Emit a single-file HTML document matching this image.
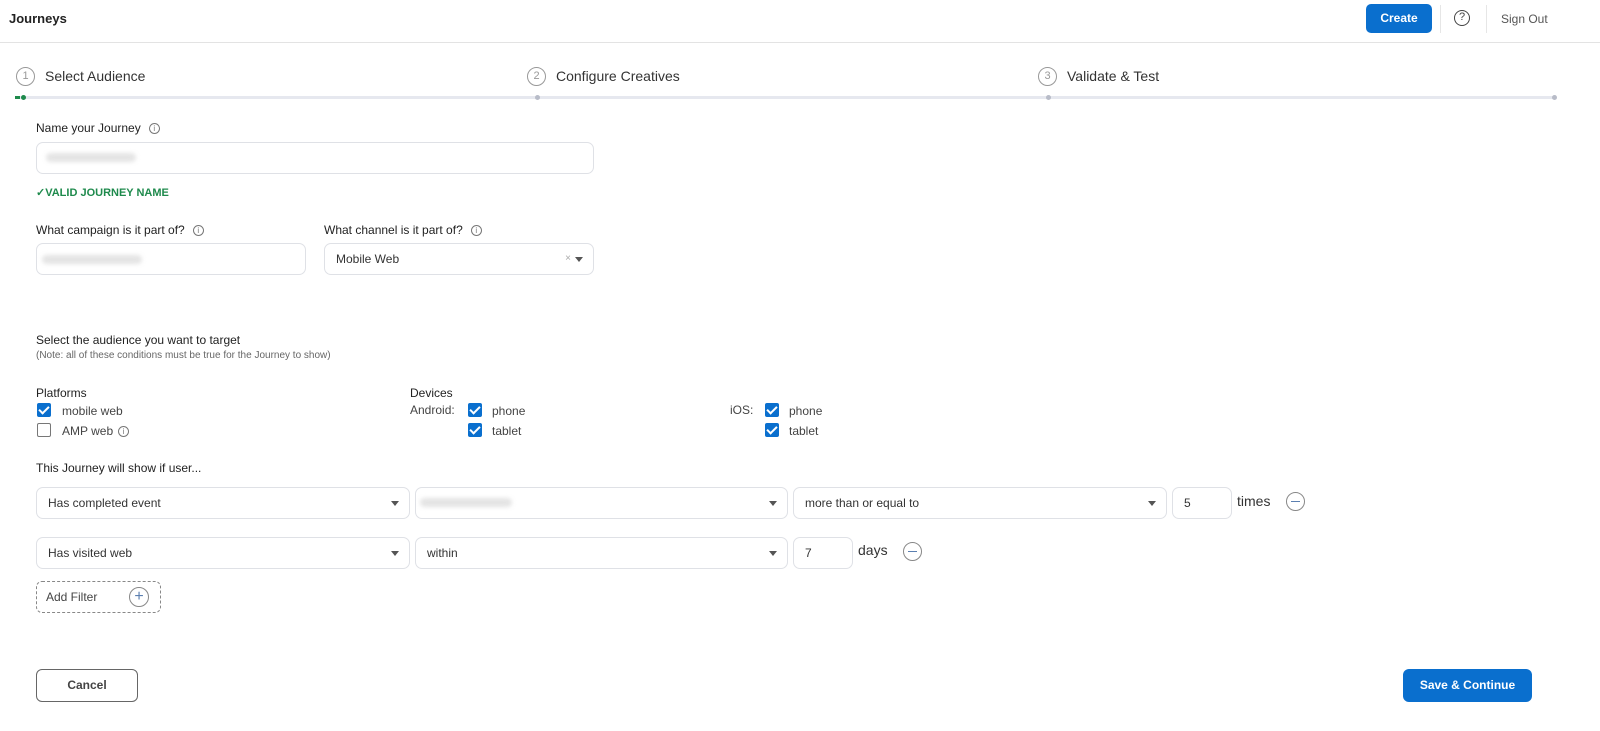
<!DOCTYPE html>
<html><head><meta charset="utf-8"><style>
*{box-sizing:border-box;margin:0;padding:0}
body{width:1600px;height:731px;background:#fff;font-family:"Liberation Sans",sans-serif;color:#222;position:relative;overflow:hidden;font-size:12px}
.a{position:absolute}
.box{position:absolute;border:1px solid #dfe1e6;border-radius:7px;background:#fff}
.lbl{position:absolute;font-size:12px;color:#222}
.sel{position:absolute;border:1px solid #dfe1e6;border-radius:7px;font-size:12px;color:#333;padding-left:11px;line-height:30px}
.sel .car{position:absolute;right:10px;top:13px;border-left:4px solid transparent;border-right:4px solid transparent;border-top:5px solid #555}
.info{display:inline-block;width:11px;height:11px;border:1px solid #777;border-radius:50%;font-size:8px;line-height:9px;text-align:center;color:#777;vertical-align:middle;margin-left:8px}
.cb{position:absolute;width:14px;height:14px;border-radius:2px;background:#0a6fce}
.cb::after{content:"";position:absolute;left:4px;top:1px;width:4px;height:8px;border:solid #fff;border-width:0 2px 2px 0;transform:rotate(45deg)}
.cbe{position:absolute;width:14px;height:14px;border-radius:2px;border:1.5px solid #777}
.step{position:absolute;width:19px;height:19px;border:1px solid #999;border-radius:50%;font-size:11px;color:#999;text-align:center;line-height:17px}
.stxt{position:absolute;font-size:14px;color:#333}
.min{position:absolute;width:19px;height:19px;border:1px solid #888;border-radius:50%}
.min::after{content:"";position:absolute;left:4px;top:8px;width:9px;height:1px;background:#5b7fb0}
.blur{position:absolute;height:9px;background:#e4e4e4;border-radius:5px;filter:blur(2px)}
</style></head><body>
<div class="a" style="left:9px;top:11px;font-size:13px;font-weight:bold;color:#222">Journeys</div>
<div class="a" style="left:1366px;top:4px;width:66px;height:29px;background:#0a6fce;border-radius:5px;color:#fff;font-weight:bold;font-size:12px;text-align:center;line-height:29px">Create</div>
<div class="a" style="left:1440px;top:5px;width:1px;height:28px;background:#e6e6e6"></div>
<div class="a" style="left:1486px;top:5px;width:1px;height:28px;background:#e6e6e6"></div>
<div class="a" style="left:1454px;top:10px;width:16px;height:16px;border:1.5px solid #444;border-radius:50%;font-size:11px;text-align:center;line-height:13px;color:#444">?</div>
<div class="a" style="left:1501px;top:12px;font-size:12px;color:#555">Sign Out</div>
<div class="a" style="left:0;top:42px;width:1600px;height:1px;background:#e3e3e3"></div>

<div class="step" style="left:16px;top:67px">1</div><div class="stxt" style="left:45px;top:68px">Select Audience</div>
<div class="step" style="left:527px;top:67px">2</div><div class="stxt" style="left:556px;top:68px">Configure Creatives</div>
<div class="step" style="left:1038px;top:67px">3</div><div class="stxt" style="left:1067px;top:68px">Validate &amp; Test</div>
<div class="a" style="left:16px;top:96px;width:1538px;height:3px;background:#e6e8ef"></div>
<div class="a" style="left:15px;top:96px;width:5px;height:3px;background:#1e8a4c"></div>
<div class="a" style="left:21px;top:95px;width:5px;height:5px;border-radius:50%;background:#1e8a4c"></div>
<div class="a" style="left:535px;top:95px;width:5px;height:5px;border-radius:50%;background:#b8bcc8"></div>
<div class="a" style="left:1046px;top:95px;width:5px;height:5px;border-radius:50%;background:#b8bcc8"></div>
<div class="a" style="left:1552px;top:95px;width:5px;height:5px;border-radius:50%;background:#b8bcc8"></div>

<div class="lbl" style="left:36px;top:121px">Name your Journey<span class="info">i</span></div>
<div class="box" style="left:36px;top:142px;width:558px;height:32px"></div>
<div class="blur" style="left:46px;top:153px;width:90px"></div>
<div class="a" style="left:36px;top:186px;font-size:11px;font-weight:bold;color:#1e8a4c">✓VALID JOURNEY NAME</div>
<div class="lbl" style="left:36px;top:223px">What campaign is it part of?<span class="info">i</span></div>
<div class="lbl" style="left:324px;top:223px">What channel is it part of?<span class="info">i</span></div>
<div class="box" style="left:36px;top:243px;width:270px;height:32px"></div>
<div class="blur" style="left:42px;top:255px;width:100px"></div>
<div class="sel" style="left:324px;top:243px;width:270px;height:32px">Mobile Web<span class="a" style="right:22px;top:0;color:#aaa;font-size:10px">×</span><span class="car"></span></div>

<div class="lbl" style="left:36px;top:333px">Select the audience you want to target</div>
<div class="a" style="left:36px;top:350px;font-size:10px;color:#666">(Note: all of these conditions must be true for the Journey to show)</div>
<div class="lbl" style="left:36px;top:386px">Platforms</div>
<div class="cb" style="left:37px;top:403px"></div><div class="lbl" style="left:62px;top:404px;color:#444">mobile web</div>
<div class="cbe" style="left:37px;top:423px"></div><div class="lbl" style="left:62px;top:424px;color:#444">AMP web<span class="info" style="margin-left:5px">i</span></div>
<div class="lbl" style="left:410px;top:386px">Devices</div>
<div class="lbl" style="left:410px;top:403px;color:#444">Android:</div>
<div class="cb" style="left:468px;top:403px"></div><div class="lbl" style="left:492px;top:404px;color:#444">phone</div>
<div class="cb" style="left:468px;top:423px"></div><div class="lbl" style="left:492px;top:424px;color:#444">tablet</div>
<div class="lbl" style="left:730px;top:403px;color:#444">iOS:</div>
<div class="cb" style="left:765px;top:403px"></div><div class="lbl" style="left:789px;top:404px;color:#444">phone</div>
<div class="cb" style="left:765px;top:423px"></div><div class="lbl" style="left:789px;top:424px;color:#444">tablet</div>

<div class="lbl" style="left:36px;top:461px">This Journey will show if user...</div>
<div class="sel" style="left:36px;top:487px;width:374px;height:32px">Has completed event<span class="car"></span></div>
<div class="sel" style="left:415px;top:487px;width:373px;height:32px"><span class="car"></span></div>
<div class="blur" style="left:420px;top:498px;width:92px"></div>
<div class="sel" style="left:793px;top:487px;width:374px;height:32px">more than or equal to<span class="car"></span></div>
<div class="sel" style="left:1172px;top:487px;width:60px;height:32px">5</div>
<div class="a" style="left:1237px;top:493px;font-size:14px;color:#333">times</div>
<div class="min" style="left:1286px;top:492px"></div>
<div class="sel" style="left:36px;top:537px;width:374px;height:32px">Has visited web<span class="car"></span></div>
<div class="sel" style="left:415px;top:537px;width:373px;height:32px">within<span class="car"></span></div>
<div class="sel" style="left:793px;top:537px;width:60px;height:32px">7</div>
<div class="a" style="left:858px;top:542px;font-size:14px;color:#333">days</div>
<div class="min" style="left:903px;top:542px"></div>
<div class="a" style="left:36px;top:581px;width:125px;height:32px;border:1px dashed #888;border-radius:6px"></div>
<div class="lbl" style="left:46px;top:590px;color:#444">Add Filter</div>
<div class="a" style="left:129px;top:587px;width:20px;height:20px;border:1px solid #888;border-radius:50%;text-align:center;line-height:17px;font-size:16px;color:#5b7fb0">+</div>

<div class="a" style="left:36px;top:669px;width:102px;height:33px;border:1px solid #666;border-radius:6px;text-align:center;line-height:31px;font-size:12px;font-weight:bold;color:#444">Cancel</div>
<div class="a" style="left:1403px;top:669px;width:129px;height:33px;background:#0a6fce;border-radius:6px;text-align:center;line-height:33px;font-size:12px;font-weight:bold;color:#fff">Save &amp; Continue</div>
</body></html>
